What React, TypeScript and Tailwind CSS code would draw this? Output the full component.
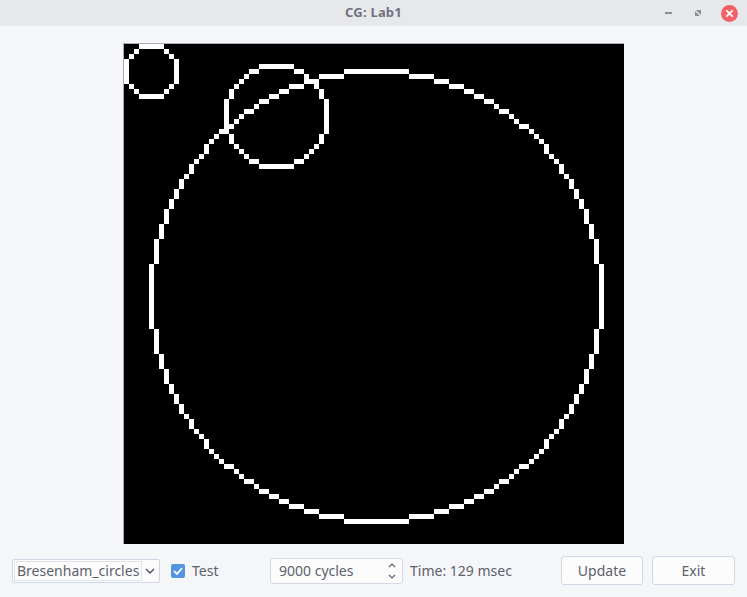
import React from 'react';

const CELL = 5;

// midpoint / Bresenham circle on the 100x100 grid
function circle(cx: number, cy: number, r: number): [number, number][] {
  const pts: [number, number][] = [];
  let x = 0;
  let y = r;
  let d = 3 - 2 * r;
  while (y >= x) {
    const oct: [number, number][] = [
      [x, y], [-x, y], [x, -y], [-x, -y],
      [y, x], [-y, x], [y, -x], [-y, -x],
    ];
    oct.forEach(([a, b]) => pts.push([cx + a, cy + b]));
    if (d < 0) {
      d += 4 * x + 6;
    } else {
      d += 4 * (x - y) + 10;
      y--;
    }
    x++;
  }
  return pts;
}

const pixels = [...circle(5, 5, 5), ...circle(30, 14, 10), ...circle(50, 50, 45)].filter(
  ([x, y]) => x >= 0 && y >= 0 && x < 100 && y < 100,
);

function Canvas() {
  return (
    <svg width={500} height={500} viewBox="0 0 500 500" className="block" shapeRendering="crispEdges">
      <rect width={500} height={500} fill="#000" />
      {pixels.map(([x, y], i) => (
        <rect key={i} x={x * CELL} y={y * CELL} width={CELL} height={CELL} fill="#fff" />
      ))}
    </svg>
  );
}

function TitleBar() {
  return (
    <div className="relative h-[26px] bg-[#e7e8eb] flex items-center justify-center shrink-0">
      <span className="text-[13px] font-bold text-[#6f7380] tracking-[0.2px]">CG: Lab1</span>
      <div className="absolute right-[9px] top-0 h-[26px] flex items-center gap-[16px]">
        <svg width="14" height="14" viewBox="0 0 14 14">
          <rect x="4" y="6" width="7" height="2" fill="#8b8f99" />
        </svg>
        <svg width="14" height="14" viewBox="0 0 14 14">
          <path d="M4 5 L4 10 L9 10 Z M10 4 L5 4 L10 9 Z" fill="#8b8f99" />
        </svg>
        <svg width="17" height="17" viewBox="0 0 17 17">
          <circle cx="8.5" cy="8.5" r="8.5" fill="#f46067" />
          <path d="M5.8 5.8 L11.2 11.2 M11.2 5.8 L5.8 11.2" stroke="#fff" strokeWidth="1.8" strokeLinecap="round" />
        </svg>
      </div>
    </div>
  );
}

export default function App() {
  return (
    <div
      className="w-[747px] h-[597px] flex flex-col bg-[#f5f6f7] text-[#5c616c] overflow-hidden"
      style={{ fontFamily: '"Noto Sans", "DejaVu Sans", sans-serif' }}
    >
      <TitleBar />
      <div className="flex justify-center pt-[17px]">
        <div className="border-l border-t border-[#a9aeb6]">
          <Canvas />
        </div>
      </div>

      <div className="flex items-center h-[54px] pl-[12px] pr-[12px] text-[14px]">
        {/* algorithm combo */}
        <div className="w-[148px] h-[24px] border border-[#cfd6e6] rounded-[2px] bg-[#fcfcfc] flex items-center p-[1px]">
          <div className="flex-1 h-full border border-[#dfe3ea] flex items-center pl-[2px] overflow-hidden whitespace-nowrap">
            Bresenham_circles
          </div>
          <div className="w-[16px] h-full flex items-center justify-center">
            <svg width="10" height="6" viewBox="0 0 10 6">
              <path d="M1 1 L5 5 L9 1" fill="none" stroke="#4a4f5a" strokeWidth="1.4" />
            </svg>
          </div>
        </div>

        {/* test checkbox */}
        <div className="w-[110px] flex items-center pl-[11px]">
          <div className="w-[14px] h-[14px] rounded-[2px] bg-[#5294e2] flex items-center justify-center">
            <svg width="10" height="8" viewBox="0 0 10 8">
              <path d="M1 4 L4 7 L9 1" fill="none" stroke="#fff" strokeWidth="1.8" />
            </svg>
          </div>
          <span className="ml-[7px]">Test</span>
        </div>

        {/* cycles spinbox */}
        <div className="relative w-[133px] h-[26px] border border-[#d3d9e4] rounded-[3px] bg-[#fcfcfc] flex items-center">
          <span className="pl-[8px] flex-1">9000 cycles</span>
          <div className="w-[18px] h-full flex flex-col items-center justify-center gap-[6px] pr-[2px]">
            <svg width="8" height="5" viewBox="0 0 8 5">
              <path d="M1 4 L4 1 L7 4" fill="none" stroke="#5c616c" strokeWidth="1.2" />
            </svg>
            <svg width="8" height="5" viewBox="0 0 8 5">
              <path d="M1 1 L4 4 L7 1" fill="none" stroke="#5c616c" strokeWidth="1.2" />
            </svg>
          </div>
        </div>

        <span className="ml-[7px]">Time: 129 msec</span>

        <div className="flex-1" />

        <button className="w-[82px] h-[29px] border border-[#cfd6e6] rounded-[3px] bg-[#fcfcfc] text-[#5c616c]">
          Update
        </button>
        <button className="ml-[9px] w-[83px] h-[29px] border border-[#cfd6e6] rounded-[3px] bg-[#fcfcfc] text-[#5c616c]">
          Exit
        </button>
      </div>
    </div>
  );
}
